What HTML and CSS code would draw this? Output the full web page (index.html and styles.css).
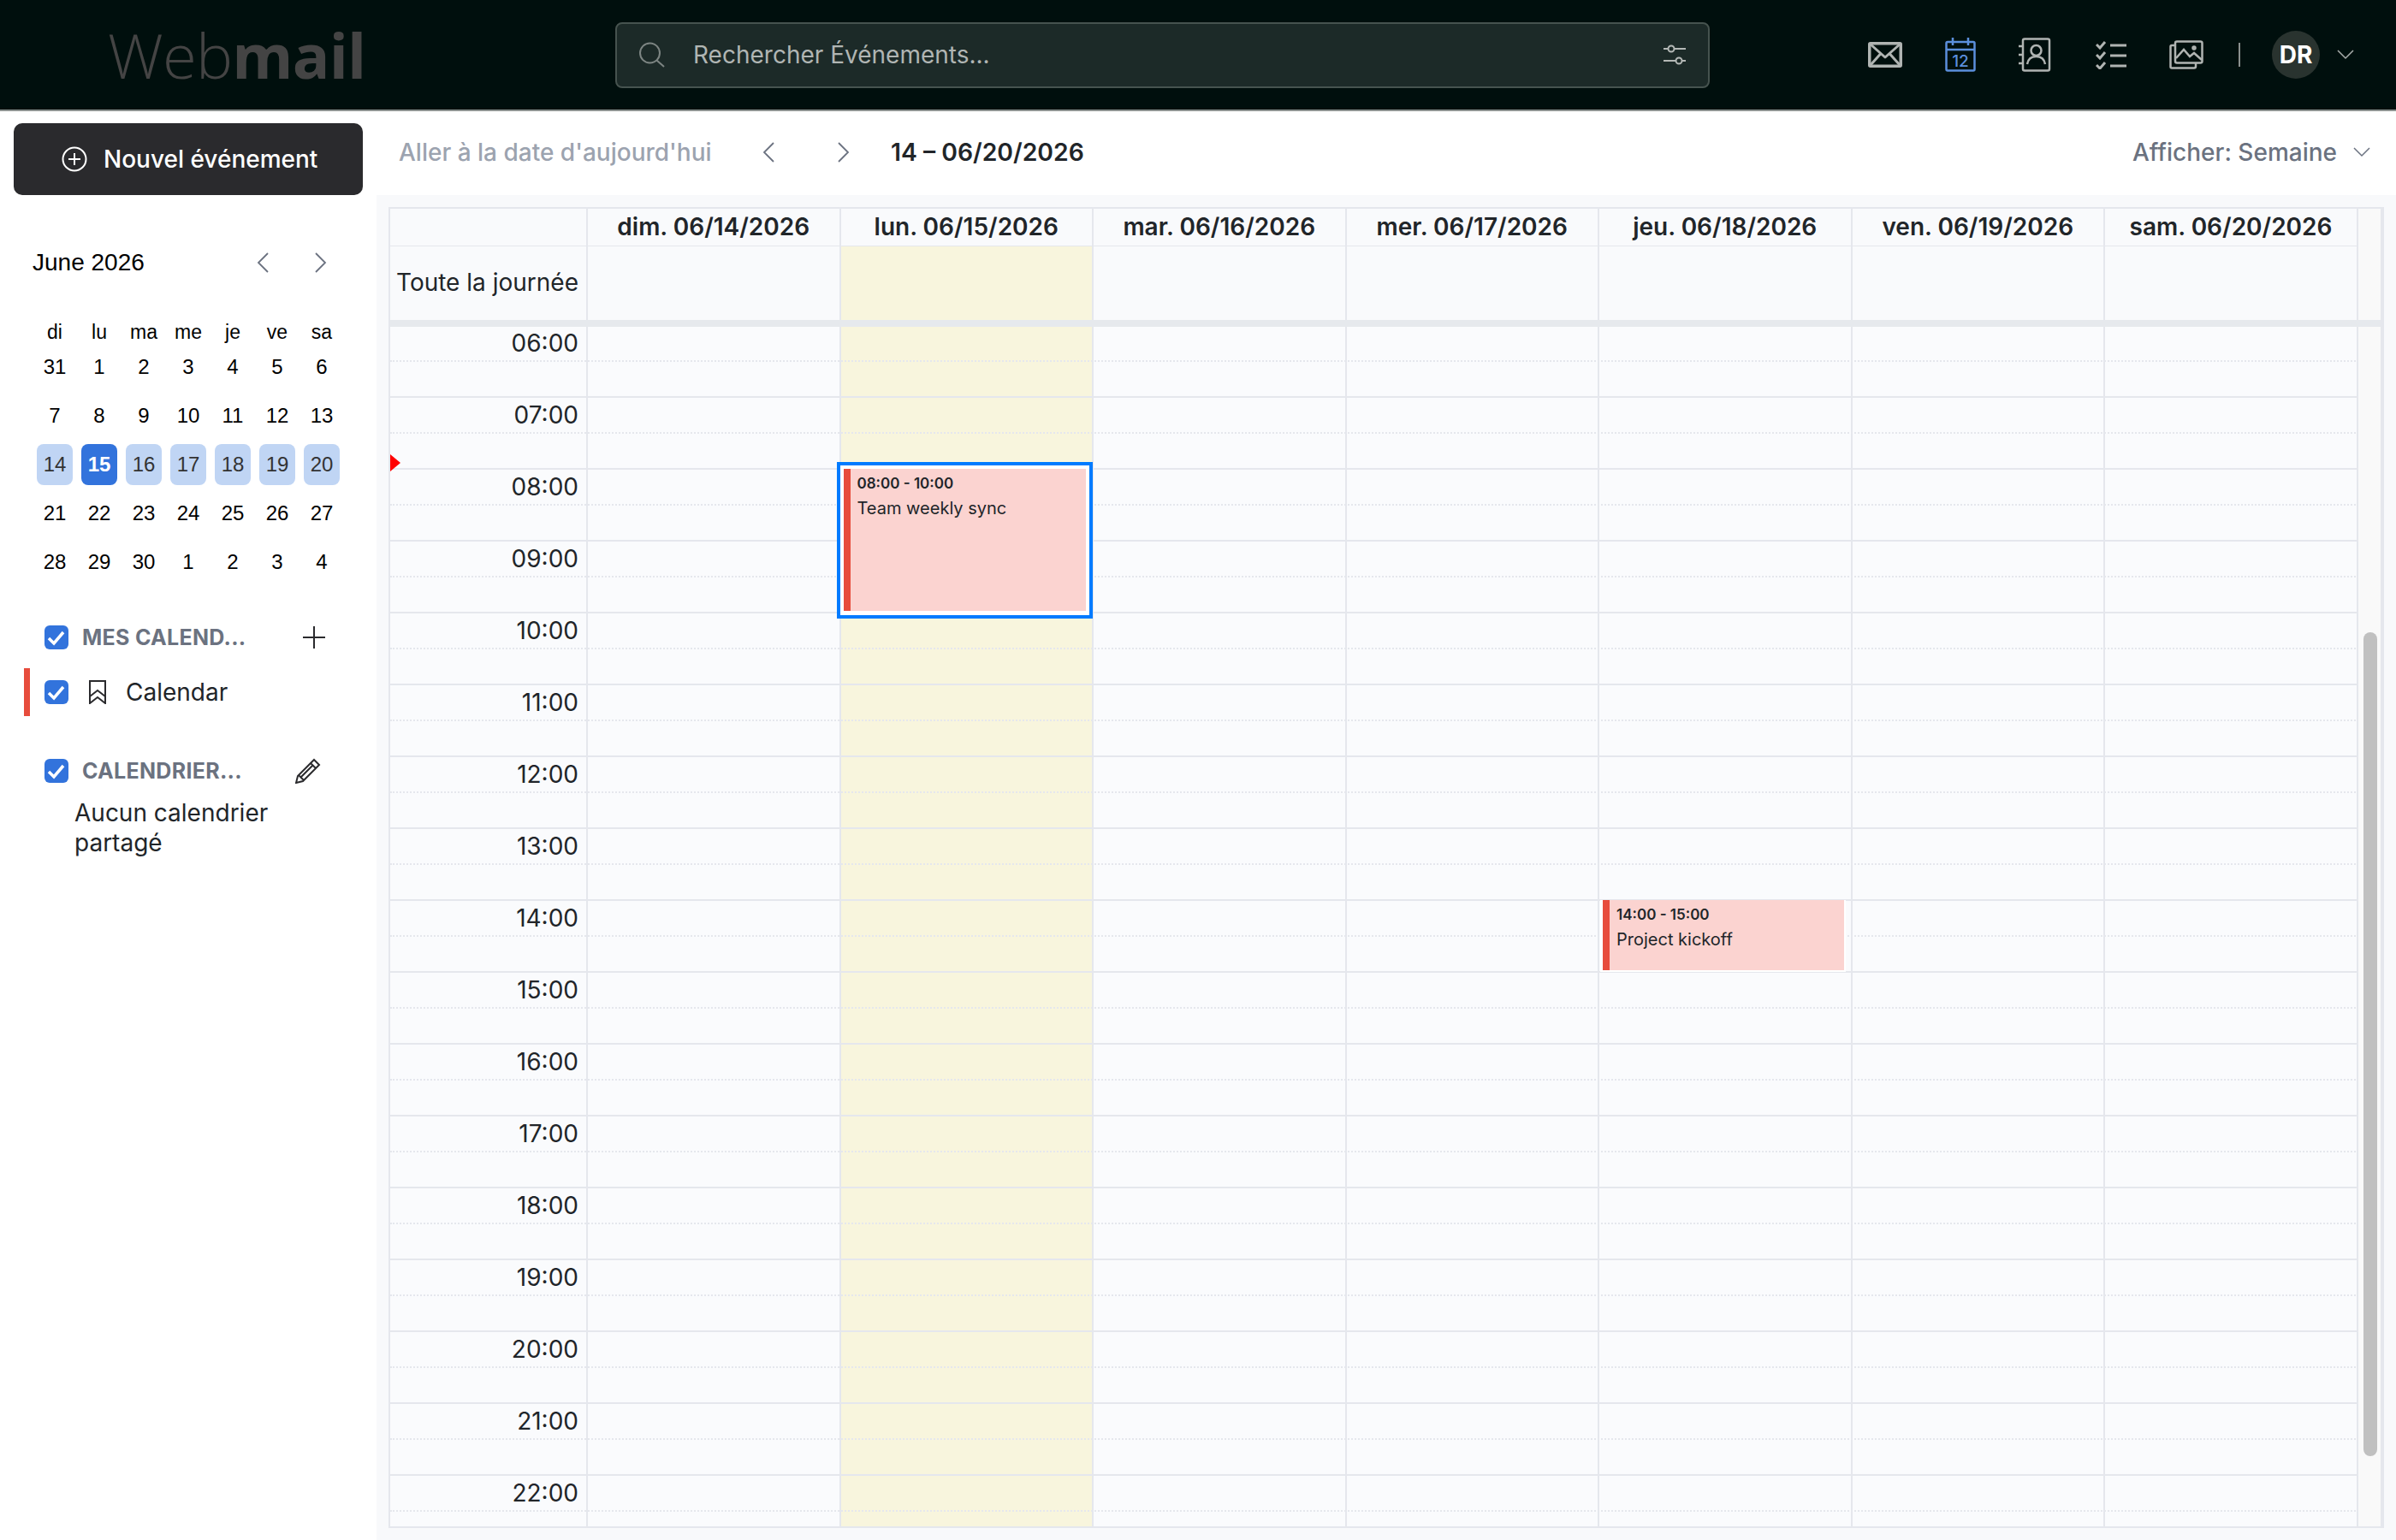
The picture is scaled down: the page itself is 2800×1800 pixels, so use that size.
FILE: index.html
```html
<!DOCTYPE html>
<html lang="fr">
<head>
<meta charset="utf-8">
<title>Webmail</title>
<link rel="stylesheet" href="styles.css">
</head>
<body>
<header class="topbar">
  <div class="logo"><span class="logo-light">Web</span><span class="logo-bold">mail</span></div>
  <div class="search">
    <svg class="search-icon" viewBox="0 0 31 30" fill="none" stroke="currentColor" stroke-width="2"><circle cx="13.500" cy="13" r="11.500"/><path d="M21.500 21.500l8.500 7.500"/></svg>
    <span class="search-text">Rechercher Événements...</span>
    <svg class="search-filter" viewBox="0 0 28 28" fill="none" stroke="currentColor" stroke-width="2"><path d="M1 7h5.500M13.500 7H27M1 21h14.500M22.500 21H27"/><circle cx="10" cy="7" r="3.500"/><circle cx="19" cy="21" r="3.500"/></svg>
  </div>
  <nav class="apps">
    <svg class="app app-mail" viewBox="0 0 40 30" fill="none" stroke="currentColor" stroke-width="3.500" stroke-linejoin="round"><rect x="1.750" y="1.750" width="36.500" height="26.500" rx="1"/><path d="M2 2l18 16L38 2M2 28l13-14.500M38 28L25 13.500" stroke-width="3"/></svg>
    <svg class="app app-cal" viewBox="0 0 36 40" fill="none" stroke="currentColor" stroke-width="2.500"><rect x="1.500" y="5" width="33" height="33.500" rx="1.500"/><path d="M1.500 14h33M9 0v9M27 0v9"/><text x="18" y="34" text-anchor="middle" class="app-cal-num">12</text></svg>
    <svg class="app app-contact" viewBox="0 0 38 40" fill="none" stroke="currentColor" stroke-width="2.500"><rect x="5" y="1.500" width="31" height="37" rx="2"/><path d="M0 10h5M0 20h5M0 30h5"/><circle cx="20.500" cy="15" r="6"/><path d="M10 31c1-6 5-9 10.500-9S30 25 31 31"/></svg>
    <svg class="app app-tasks" viewBox="0 0 36 34" fill="none" stroke="currentColor" stroke-width="3"><path d="M1 5l4 4 6-7M1 17l4 4 6-7M1 29l4 4 6-7"/><path d="M17 6h19M17 18h19M17 30h19"/></svg>
    <svg class="app app-images" viewBox="0 0 40 34" fill="none" stroke="currentColor" stroke-width="2.500"><rect x="7" y="1.500" width="31.500" height="25" rx="2"/><path d="M7 6H3a1.500 1.500 0 0 0-1.500 1.500V31a1.500 1.500 0 0 0 1.500 1.500h26a2 2 0 0 0 2-2v-4"/><path d="M8 21l9-10 7 8 5-4 9 8"/><circle cx="29" cy="9" r="1.500"/></svg>
    <span class="app-divider"></span>
    <span class="avatar">DR</span>
    <svg class="chev-down" viewBox="0 0 20 12" fill="none" stroke="currentColor" stroke-width="1.500"><path d="M1 1l9 9 9-9"/></svg>
  </nav>
</header>

<div class="layout">
  <aside class="sidebar">
    <button class="new-event">
      <svg class="plus-circle" viewBox="0 0 30 30" fill="none" stroke="currentColor" stroke-width="2"><circle cx="15" cy="15" r="13.500"/><path d="M15 8v14M8 15h14"/></svg>
      Nouvel événement
    </button>

    <div class="mini-head">
      <span class="mini-title">June 2026</span>
      <span class="mini-nav">
        <svg class="mini-chev" viewBox="0 0 14 24" fill="none" stroke="currentColor" stroke-width="1.800"><path d="M13 1L2 12l11 11"/></svg>
        <svg class="mini-chev" viewBox="0 0 14 24" fill="none" stroke="currentColor" stroke-width="1.800"><path d="M1 1l11 11L1 23"/></svg>
      </span>
    </div>

    <div class="mini-labels">
      <span>di</span><span>lu</span><span>ma</span><span>me</span><span>je</span><span>ve</span><span>sa</span>
    </div>
    <div class="mini-grid">
      <span>31</span><span>1</span><span>2</span><span>3</span><span>4</span><span>5</span><span>6</span>
      <span>7</span><span>8</span><span>9</span><span>10</span><span>11</span><span>12</span><span>13</span>
      <span class="wk">14</span><span class="today">15</span><span class="wk">16</span><span class="wk">17</span><span class="wk">18</span><span class="wk">19</span><span class="wk">20</span>
      <span>21</span><span>22</span><span>23</span><span>24</span><span>25</span><span>26</span><span>27</span>
      <span>28</span><span>29</span><span>30</span><span>1</span><span>2</span><span>3</span><span>4</span>
    </div>

    <div class="cal-head cal-head-first">
      <span class="check"><svg viewBox="0 0 28 28" fill="none" stroke="#fff" stroke-width="3.500"><path d="M5 15l6 6L22 8"/></svg></span>
      <span class="cal-title">MES CALEND...</span>
      <svg class="cal-plus" viewBox="0 0 28 28" fill="none" stroke="currentColor" stroke-width="2"><path d="M14 1v26M1 14h26"/></svg>
    </div>
    <div class="cal-item">
      <span class="cal-bar"></span>
      <span class="check"><svg viewBox="0 0 28 28" fill="none" stroke="#fff" stroke-width="3.500"><path d="M5 15l6 6L22 8"/></svg></span>
      <svg class="bookmark" viewBox="0 0 20 28" fill="none" stroke="currentColor" stroke-width="2"><path d="M1 1h18v26l-9-7-9 7zM1 19l9-7 9 7"/></svg>
      <span class="cal-name">Calendar</span>
    </div>

    <div class="cal-head cal-head-second">
      <span class="check"><svg viewBox="0 0 28 28" fill="none" stroke="#fff" stroke-width="3.500"><path d="M5 15l6 6L22 8"/></svg></span>
      <span class="cal-title">CALENDRIER...</span>
      <svg class="cal-pencil" viewBox="0 0 30 30" fill="none" stroke="currentColor" stroke-width="2"><path d="M22 2l6 6L9 27l-8 2 2-8zM18 6l6 6M4 20l6 6M7 22L21 8"/></svg>
    </div>
    <p class="no-shared">Aucun calendrier partagé</p>
  </aside>

  <main class="main">
    <div class="toolbar">
      <span class="goto">Aller à la date d'aujourd'hui</span>
      <svg class="tool-chev tool-chev-first" viewBox="0 0 14 24" fill="none" stroke="currentColor" stroke-width="1.800"><path d="M13 1L2 12l11 11"/></svg>
      <svg class="tool-chev tool-chev-second" viewBox="0 0 14 24" fill="none" stroke="currentColor" stroke-width="1.800"><path d="M1 1l11 11L1 23"/></svg>
      <span class="range">14 – 06/20/2026</span>
      <span class="view">Afficher: Semaine</span>
      <svg class="view-chev" viewBox="0 0 20 12" fill="none" stroke="currentColor" stroke-width="1.500"><path d="M1 1l9 9 9-9"/></svg>
    </div>

    <div class="board">
      <div class="table">
        <div class="thead">
          <div class="row-head">
            <div class="time-col"></div>
            <div class="day-head">dim. 06/14/2026</div>
            <div class="day-head">lun. 06/15/2026</div>
            <div class="day-head">mar. 06/16/2026</div>
            <div class="day-head">mer. 06/17/2026</div>
            <div class="day-head">jeu. 06/18/2026</div>
            <div class="day-head">ven. 06/19/2026</div>
            <div class="day-head">sam. 06/20/2026</div>
          </div>
          <div class="row-allday">
            <div class="time-col allday-label">Toute la journée</div>
            <div class="allday"></div>
            <div class="allday today-col"></div>
            <div class="allday"></div>
            <div class="allday"></div>
            <div class="allday"></div>
            <div class="allday"></div>
            <div class="allday"></div>
          </div>
        </div>
        <div class="divider"></div>
        <div class="scroll">
          <div class="body">
            <div class="times">
              <div class="time">06:00</div><div class="time">07:00</div><div class="time">08:00</div>
              <div class="time">09:00</div><div class="time">10:00</div><div class="time">11:00</div>
              <div class="time">12:00</div><div class="time">13:00</div><div class="time">14:00</div>
              <div class="time">15:00</div><div class="time">16:00</div><div class="time">17:00</div>
              <div class="time">18:00</div><div class="time">19:00</div><div class="time">20:00</div>
              <div class="time">21:00</div><div class="time">22:00</div>
            </div>
            <div class="day"></div>
            <div class="day today-col">
              <div class="event event-focus">
                <div class="event-inner">
                  <div class="event-time">08:00 - 10:00</div>
                  <div class="event-title">Team weekly sync</div>
                </div>
              </div>
            </div>
            <div class="day"></div>
            <div class="day"></div>
            <div class="day">
              <div class="event event-plain">
                <div class="event-inner">
                  <div class="event-time">14:00 - 15:00</div>
                  <div class="event-title">Project kickoff</div>
                </div>
              </div>
            </div>
            <div class="day"></div>
            <div class="day"></div>
            <div class="lines">
              <i></i><i></i><i></i><i></i><i></i><i></i><i></i><i></i><i></i>
              <i></i><i></i><i></i><i></i><i></i><i></i><i></i><i></i>
            </div>
            <span class="now-marker"></span>
          </div>
          <div class="scrollbar"><div class="thumb"></div></div>
        </div>
      </div>
    </div>
  </main>
</div>
</body>
</html>
```

FILE: styles.css
```css
* { box-sizing: border-box; }
html, body { margin: 0; height: 100%; }
body {
  font-family: "Inter", "Liberation Sans", sans-serif;
  font-size: 28px;
  color: #212529;
  background: #fff;
  width: 2800px;
  height: 1800px;
  overflow: hidden;
}
svg { display: block; flex: none; }

/* top bar */
.topbar {
  height: 130px;
  background: #000f0d;
  border-bottom: 2px solid #8d9290;
  display: flex;
  align-items: center;
  padding-left: 126px;
}
.logo { width: 593px; font-family: "Open Sans", sans-serif; font-size: 72.500px; line-height: 133px; color: #444; letter-spacing: -0.800px; }
.logo-light { font-weight: 300; }
.logo-bold { font-weight: 700; }
.search {
  width: 1279px;
  height: 77px;
  background: #1c2a28;
  border: 2px solid #46534f;
  border-radius: 8px;
  display: flex;
  align-items: center;
  padding: 0 25px;
  color: #b4b8b6;
}
.search-icon { width: 31px; height: 30px; color: #7d8583; }
.search-text { margin-left: 33px; flex: 1; color: #b0b5b3; font-size: 28px; }
.search-filter { width: 28px; height: 28px; }
.apps { display: flex; align-items: center; margin-left: 185px; color: #b0b4b2; }
.app-mail { width: 40px; height: 30px; }
.app-cal { width: 36px; height: 40px; margin-left: 50px; color: #5b8fdc; }
.app-cal-num { font-family: "Inter", sans-serif; font-size: 19px; font-weight: 500; fill: currentColor; stroke: none; }
.app-contact { width: 38px; height: 40px; margin-left: 50px; }
.app-tasks { width: 36px; height: 34px; margin-left: 52px; }
.app-images { width: 40px; height: 34px; margin-left: 50px; }
.app-divider { width: 2px; height: 28px; background: #8a8f8d; margin-left: 41px; }
.avatar {
  width: 56px; height: 56px; border-radius: 50%;
  background: #29332f; color: #fff; font-weight: 700; font-size: 28px;
  display: flex; align-items: center; justify-content: center;
  margin-left: 37px;
}
.chev-down { width: 20px; height: 12px; margin-left: 20px; color: #a9aeac; }

/* layout */
.layout { display: flex; height: 1670px; }
.sidebar { width: 440px; flex: none; padding: 14px 16px 0; position: relative; }
.main { flex: 1; display: flex; flex-direction: column; min-width: 0; }

/* sidebar */
.new-event {
  width: 408px; height: 84px;
  background: #2a2a2d; color: #fff;
  border: 0; border-radius: 10px;
  font: 500 28px "Inter", sans-serif;
  display: flex; align-items: center; padding: 0 0 0 56px; gap: 19px;
}
.plus-circle { width: 30px; height: 30px; }
.mini-head { display: flex; align-items: center; justify-content: space-between; margin: 55px 0 0 22px; height: 48px; }
.mini-title { font-family: "Liberation Sans", sans-serif; font-size: 28px; color: #000; }
.mini-nav { display: flex; gap: 54px; margin-right: 42px; color: #6b7280; }
.mini-chev { width: 14px; height: 24px; }
.mini-labels, .mini-grid { display: grid; grid-template-columns: repeat(7, 42px); column-gap: 10px; margin-left: 27px; font-family: "Liberation Sans", sans-serif; color: #000; text-align: center; }
.mini-labels { margin-top: 43px; font-size: 23px; height: 28px; line-height: 28px; }
.mini-grid { grid-auto-rows: 48px; row-gap: 9px; margin-top: 3px; font-size: 24px; }
.mini-grid span { display: flex; align-items: center; justify-content: center; border-radius: 8px; }
.mini-grid .wk { background: #c0d5f4; color: #333; }
.mini-grid .today { background: #3273dc; color: #fff; font-weight: 700; }

.cal-head { display: flex; align-items: center; height: 28px; padding-left: 36px; }
.cal-head-first { margin-top: 50px; }
.cal-head-second { margin-top: 50px; }
.check { width: 28px; height: 28px; border-radius: 6px; background: #3273dc; flex: none; }
.check svg { width: 28px; height: 28px; }
.cal-title { margin-left: 16px; font-size: 25px; font-weight: 700; color: #6b7280; letter-spacing: 0.300px; white-space: nowrap; flex: 1; }
.cal-plus { width: 28px; height: 28px; margin-right: 43px; color: #2a2a2d; }
.cal-pencil { width: 30px; height: 30px; margin-right: 49px; color: #2a2a2d; }
.cal-item { display: flex; align-items: center; height: 56px; margin-top: 22px; padding-left: 36px; position: relative; }
.cal-bar { position: absolute; left: 12px; top: 0; bottom: 0; width: 7px; background: #e74c3c; }
.bookmark { width: 20px; height: 28px; margin-left: 24px; color: #2a2a2d; }
.cal-name { margin-left: 23px; font-size: 28px; color: #212529; }
.no-shared { margin: 18px 0 0 71px; font-size: 28px; line-height: 35px; width: 300px; color: #212529; }

/* toolbar */
.toolbar { height: 98px; display: flex; align-items: center; padding: 0 0 2px 26px; }
.goto { width: 364px; font-weight: 500; color: #9ca3af; white-space: nowrap; }
.tool-chev { width: 14px; height: 24px; color: #6b7280; }
.tool-chev-first { margin-left: 61px; }
.tool-chev-second { margin-left: 74px; }
.range { margin-left: 48px; font-weight: 600; font-size: 28.300px; color: #212529; white-space: nowrap; }
.view { margin-left: auto; font-weight: 500; color: #6b7280; white-space: nowrap; }
.view-chev { width: 20px; height: 12px; margin: 0 30px 0 19px; color: #6b7280; }

/* board */
.board { flex: 1; background: #f8f9fb; padding: 14px; min-height: 0; }
.table { height: 100%; border: 2px solid #e5e7ed; border-right-width: 4px; display: flex; flex-direction: column; }
.thead { flex: none; background: #f9f9f9; }
.row-head, .row-allday, .body { display: grid; grid-template-columns: 229px repeat(6, 295.5px) 298px; width: 2300px; }
.row-head { height: 42px; border-bottom: 2px solid #e5e7ed; box-sizing: content-box; }
.row-allday { height: 86px; }
.day-head { border-left: 2px solid #e5e7ed; text-align: center; font-weight: 600; font-size: 28px; line-height: 43px; white-space: nowrap; background: #f9fafc; }
.allday { border-left: 2px solid #e5e7ed; background: #f9fafc; }
.allday-label { text-align: right; padding-right: 9px; line-height: 85px; white-space: nowrap; }
.time-col { background: #f9fafc; }
.row-head .day-head:last-child, .row-allday .allday:last-child, .day:nth-child(8) { border-right: 2px solid #e5e7ed; }
.divider { height: 8px; background: #e6e9ed; flex: none; width: 100%; }
.scroll { flex: 1; display: flex; min-height: 0; overflow: hidden; }
.body { position: relative; height: 1428px; flex: none; background: #fafbfd; grid-template-rows: 1428px; }
.day { border-left: 2px solid #e5e7ed; position: relative; }
.times { margin-top: -1px; }
.time { height: 84px; text-align: right; padding-right: 9px; line-height: 40px; font-size: 28px; color: #212529; }
.today-col { background-color: #f8f5dd; }
.lines { position: absolute; left: 0; right: 0; top: -1px; z-index: 1; }
.lines i { display: block; height: 84px; border-bottom: 2px solid #e5e7ed; position: relative; }
.lines i::before { content: ""; position: absolute; left: 0; right: 0; top: 40px; border-top: 2px dotted #e5e7ed; }
.now-marker { position: absolute; z-index: 2; left: 0; top: 149px; width: 0; height: 0; border-left: 12px solid #ff0000; border-top: 10px solid transparent; border-bottom: 10px solid transparent; }
.scrollbar { flex: none; width: 26px; background: #f9f9f9; padding: 357px 4px 0 6px; }
.thumb { width: 16px; height: 963px; border-radius: 8px; background: #c0c0c0; }

/* events */
.event { position: absolute; z-index: 2; color: #212529; background: #fff; }
.event-inner { height: 100%; background: #fbd3d0; border-left: 8px solid #e74c3c; padding: 5px 0 0 8px; }
.event-time { font-weight: 600; font-size: 17px; line-height: 24px; white-space: nowrap; }
.event-title { font-size: 20px; line-height: 26px; margin-top: 4px; white-space: nowrap; }
.event-focus { left: -5px; right: -1px; top: 158px; height: 183px; padding: 4px 4px 5px 4px; border: 4px solid #007bff; }
.event-plain { left: 1px; right: 6px; top: 670px; height: 84px; padding: 0 2px 2px 3px; }
```
